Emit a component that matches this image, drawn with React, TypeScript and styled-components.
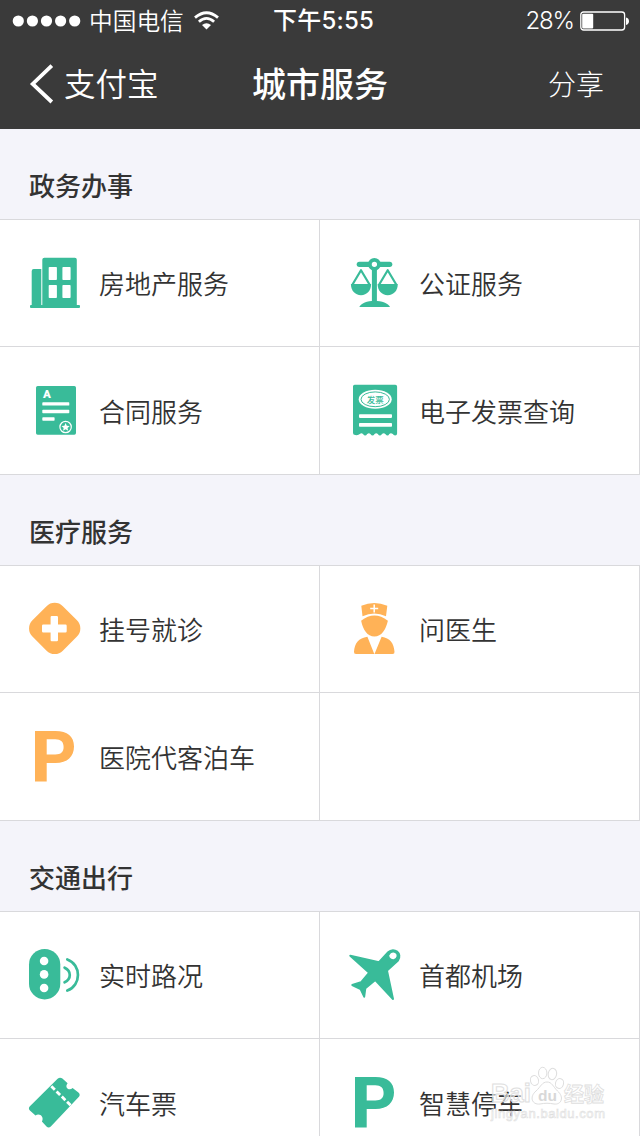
import React from "react";
import styled, { createGlobalStyle } from "styled-components";

const GREEN = "#39bb99";
const ORANGE = "#ffb257";

const GlobalStyle = createGlobalStyle`
  * { box-sizing: border-box; }
  body {
    margin: 0;
    background: #f4f4fa;
    font-family: Inter, "Noto Sans CJK SC", sans-serif;
    color: #333;
    overflow: hidden;
  }
`;

const Screen = styled.div`
  position: relative;
  width: 640px;
  height: 1136px;
  overflow: hidden;
  background: #f4f4fa;
`;

const Header = styled.header`
  height: 129px;
  background: #3a3a3a;
  color: #fff;
`;

const StatusBar = styled.div`
  display: grid;
  grid-template-columns: 1fr auto 1fr;
  align-items: center;
  height: 41px;
  padding: 0 11px 0 12px;
  font-size: 24px;
  line-height: 38px;
`;

const StatusGroup = styled.div<{ $end?: boolean }>`
  display: flex;
  align-items: center;
  justify-content: ${(p) => (p.$end ? "flex-end" : "flex-start")};
`;

const Carrier = styled.span`
  margin: 0 10px 0 8px;
  padding-top: 2px;
  font-size: 23.700px;
  font-weight: 350;
`;

const Clock = styled.span`
  font-size: 24px;
  font-weight: 500;
  letter-spacing: 0.2px;
  padding: 1px 0 0 6px;
`;

const Percent = styled.span`
  padding-top: 1px;
  font-size: 24px;
  font-weight: 350;
  letter-spacing: -1.100px;
  margin-right: 6px;
`;

const NavBar = styled.nav`
  display: grid;
  grid-template-columns: 1fr auto 1fr;
  align-items: center;
  height: 86px;
  padding: 0 36px 0 29px;
`;

const BackButton = styled.div`
  display: flex;
  align-items: center;
  gap: 10px;
  font-size: 31.500px;
  font-weight: 350;
  line-height: 44px;
`;

const BackText = styled.span`
  padding-top: 1px;
`;

const Title = styled.h1`
  margin: 0;
  padding: 2px 0 0 7px;
  font-size: 34px;
  font-weight: 500;
  line-height: 48px;
`;

const Share = styled.div`
  justify-self: end;
  padding-top: 1px;
  font-size: 28px;
  font-weight: 300;
  line-height: 40px;
`;

const SectionTitle = styled.h2`
  display: flex;
  align-items: center;
  height: 90px;
  margin: 0;
  padding: 25px 0 0 29px;
  font-size: 26px;
  font-weight: 500;
  line-height: 38px;
`;

const Grid = styled.div`
  display: grid;
  grid-template-columns: 320px 320px;
  grid-template-rows: 127px 128px;
  border-bottom: 1px solid #d9d9dc;
`;

const Cell = styled.div`
  display: flex;
  align-items: flex-start;
  gap: 19px;
  padding: 37px 0 0 28px;
  background: #fff;
  border-top: 1px solid #d9d9dc;
  border-right: 1px solid #d9d9dc;
`;

const Icon = styled.svg`
  display: block;
  flex: none;
  width: 52px;
  height: 52px;
  overflow: visible;
`;

const Label = styled.span<{ $low: boolean }>`
  padding-top: ${(p) => (p.$low ? 3 : 2)}px;
  font-size: 26px;
  font-weight: 350;
  line-height: 52px;
`;

const Watermark = styled.svg`
  position: absolute;
  left: 486px;
  top: 1062px;
  width: 124px;
  height: 64px;
`;

const Building = () => (
  <Icon viewBox="0 0 52 52" fill={GREEN}>
    <path d="M3.700 49V14a2 2 0 0 1 2-2h7.600v37z" />
    <rect x="14.300" y=".7" width="34.500" height="49" rx="2" />
    <rect x="2" y="48" width="50" height="3" rx="1" />
    <g fill="#fff">
      <rect x="20.700" y="10" width="8.200" height="13" rx=".8" />
      <rect x="34.400" y="10" width="8.200" height="13" rx=".8" />
      <rect x="20.700" y="28" width="8.200" height="13" rx=".8" />
      <rect x="34.400" y="28" width="8.200" height="13" rx=".8" />
    </g>
  </Icon>
);

const Scales = () => (
  <Icon viewBox="0 0 52 52" fill={GREEN}>
    <rect x="8.700" y="4.700" width="35.600" height="5.200" rx="2.600" />
    <rect x="23.900" y="8" width="5" height="38" />
    <circle cx="26.400" cy="7.300" r="4.500" fill="#fff" stroke={GREEN} strokeWidth="3.700" />
    <path d="M11.300 50c1.500-3.500 8-6.300 15.200-6.300S40.500 46.500 42 50z" />
    {[13, 39.700].map((x) => (
      <g key={x} transform={`translate(${x} 0)`}>
        <path d="M-8.500 27.500L0 13.200 8.500 27.500" fill="none" stroke={GREEN} strokeWidth="2.200" strokeLinejoin="round" />
        <path d="M-10.100 27H10.100C10.100 33.500 6 38.200 0 38.200S-10.100 33.500-10.100 27z" />
      </g>
    ))}
  </Icon>
);

const Contract = () => (
  <Icon viewBox="0 0 52 52">
    <rect x="8" y="2" width="40" height="48.700" rx="1.700" fill={GREEN} />
    <text x="18.900" y="14.300" textAnchor="middle" fontFamily="Roboto, sans-serif" fontSize="11.500" fontWeight="900" fill="#fff">A</text>
    <g fill="#fff">
      <rect x="14.300" y="18.200" width="27" height="3.400" rx=".7" />
      <rect x="14.300" y="25.800" width="27" height="3.400" rx=".7" />
      <rect x="14.300" y="33.300" width="12.300" height="3.400" rx=".7" />
      <path d="M37.600 39l1.200 2.700 2.900.3-2.200 1.900.7 2.900-2.600-1.500-2.600 1.500.7-2.900-2.200-1.900 2.900-.3z" />
    </g>
    <circle cx="37.600" cy="43" r="5.700" fill="none" stroke="#fff" strokeWidth="1.200" />
  </Icon>
);

const Invoice = () => (
  <Icon viewBox="0 0 52 52">
    <path
      fill={GREEN}
      d="M7 .8h40.300a1.800 1.800 0 0 1 1.800 1.800V49.500q0 2-2 2-1.500 0-2.300-1.400-2-1.700-3.500 0-1.500 3-4 0-1.500-1.700-3.300 0-2 3-4.200 0-1.500-1.700-3.200 0-2 3-4.200 0-1.500-1.700-3.200 0-2 3-4.200 0-1.500-1.700-3.200 0-1.300 1.400-4.600 1-2.200-.3-2.200-2.200V2.600A1.800 1.800 0 0 1 7 .8z"
    />
    <ellipse cx="27.200" cy="15.300" rx="16.500" ry="9.500" fill="#fff" />
    <ellipse cx="27.200" cy="15.300" rx="14.200" ry="7.400" fill="none" stroke={GREEN} strokeWidth="1" />
    <text x="27.200" y="18.500" textAnchor="middle" fontFamily="Noto Sans CJK SC, sans-serif" fontSize="8.500" fontWeight="500" fill={GREEN}>发票</text>
    <rect x="11" y="30.300" width="33" height="3.600" rx=".8" fill="#fff" />
    <rect x="11" y="39.100" width="33" height="3.600" rx=".8" fill="#fff" />
  </Icon>
);

const Register = () => (
  <Icon viewBox="0 0 52 52">
    <rect x="5.200" y="3.900" width="43" height="43" rx="11.500" fill={ORANGE} transform="rotate(45 26.700 25.400)" />
    <path d="M22.600 14.200q0-1.200 1.200-1.200h5q1.200 0 1.200 1.200v7.300h7.500q1.200 0 1.200 1.200v5.600q0 1.200-1.200 1.200H30v7.500q0 1.200-1.200 1.200h-5q-1.200 0-1.200-1.200v-7.500h-7.400q-1.200 0-1.200-1.200v-5.600q0-1.200 1.200-1.200h7.400z" fill="#fff" />
  </Icon>
);

const Doctor = () => (
  <Icon viewBox="0 0 52 52" fill={ORANGE}>
    <path d="M13.300 2.700Q26.300-2.600 39.300 2.700L38 13.200Q26.300 7.700 14.500 13.200z" />
    <path d="M26.200 1.500v8M22.200 5.500h8" stroke="#fff" strokeWidth="1.500" />
    <path d="M13.100 17.800Q26.300 7.200 39.900 17.800C37.800 27 33.500 33.500 26.400 33.500S15 27 13.100 17.800z" />
    <path d="M19.400 33.700L26.300 51H8q-2.300 0-2-2.200C6.600 40 10.600 35 19.400 33.700zM33.600 33.700L26.500 51H44.500q2.300 0 2-2.200C45.900 40 42 35 33.600 33.700z" />
  </Icon>
);

const Parking = ({ color }: { color: string }) => (
  <Icon viewBox="0 0 52 52">
    <path
      fill={color}
      fillRule="evenodd"
      d="M7 1h20.500C39.500 1 46 6.500 46 16.500S39.500 33 27.500 33H18.700v18.600H7zM18.700 9.300v15.100h8.600c5.700 0 8.300-2.700 8.300-7.500s-2.600-7.600-8.300-7.600z"
    />
  </Icon>
);

const Traffic = () => (
  <Icon viewBox="0 0 52 52">
    <rect x="1" y="0" width="31.300" height="50.400" rx="15.600" fill={GREEN} />
    <g fill="#fff">
      <circle cx="16.100" cy="12" r="4.300" />
      <circle cx="16.100" cy="25.400" r="4.300" />
      <circle cx="16.100" cy="39" r="4.300" />
    </g>
    <g fill="none" stroke={GREEN} strokeWidth="2.700" strokeLinecap="round">
      <path d="M39.300 10.400C53.500 15.500 53.500 36.500 39.300 41.600" />
      <path d="M36.600 18.700C43.500 22 43.500 30 36.600 33.300" />
    </g>
  </Icon>
);

const Plane = () => (
  <Icon viewBox="0 0 52 52">
    <path
      fill={GREEN}
      stroke={GREEN}
      strokeWidth="2"
      strokeLinejoin="round"
      d="M2.300 6.700L31 13.200 40.200 3.300C46-2.500 54.800 4.600 50 11.500L39 21.600 45 50 27.300 31 17.300 39.300 16.200 47.700 12.600 40 4.300 36 13 33.300 21.200 23.700z"
    />
    <path d="M41.200 6.800Q42.500 3.600 45.400 3.500 48.900 4 48.600 7.200 48 9.700 45.700 10.200 41.800 10.200 41.200 6.800z" fill="#fff" />
  </Icon>
);

const Ticket = () => (
  <Icon viewBox="0 0 52 52">
    <path
      fill={GREEN}
      d="M29.600 2.800q2.400-2.200 4.800-.2l5.200 4.600c-3.500 4.200 1.500 8.200 5 4.800l5.800 4.500q2.400 2.200.3 4.600L22.800 50.600q-2.200 1.900-4.300 0l-4.600-5c2.600-4.600-2.200-9-6.400-6.100l-5.600-5q-2-2.100 0-4.300z"
    />
    <path d="M23.300 10.200L43.300 30" stroke="#fff" strokeWidth="2.800" strokeDasharray="5 2.400" />
  </Icon>
);

const sections = [
  {
    title: "政务办事",
    items: [
      { label: "房地产服务", icon: <Building /> },
      { label: "公证服务", icon: <Scales /> },
      { label: "合同服务", icon: <Contract /> },
      { label: "电子发票查询", icon: <Invoice /> },
    ],
  },
  {
    title: "医疗服务",
    items: [
      { label: "挂号就诊", icon: <Register /> },
      { label: "问医生", icon: <Doctor /> },
      { label: "医院代客泊车", icon: <Parking color={ORANGE} /> },
      null,
    ],
  },
  {
    title: "交通出行",
    items: [
      { label: "实时路况", icon: <Traffic /> },
      { label: "首都机场", icon: <Plane /> },
      { label: "汽车票", icon: <Ticket /> },
      { label: "智慧停车", icon: <Parking color={GREEN} /> },
    ],
  },
];

export default function App() {
  return (
    <Screen>
      <GlobalStyle />
      <Header>
        <StatusBar>
          <StatusGroup>
            <svg width="69" height="12" viewBox="0 0 69 12" fill="#fff">
              {[0, 1, 2, 3, 4].map((i) => (
                <circle key={i} cx={6.300 + i * 14.100} cy="6" r="5.600" />
              ))}
            </svg>
            <Carrier>中国电信</Carrier>
            <svg width="26" height="20" viewBox="0 0 26 20">
              <g fill="none" stroke="#fff" strokeWidth="2.800">
                <path d="M1 6.600Q12.500-3.200 24 6.600" />
                <path d="M4.900 10.700Q12.500 4 20.100 10.700" />
              </g>
              <path d="M8 14Q12.500 10.500 17 14L12.500 18.500z" fill="#fff" />
            </svg>
          </StatusGroup>
          <Clock>下午5:55</Clock>
          <StatusGroup $end>
            <Percent>28%</Percent>
            <svg width="49" height="20" viewBox="0 0 49 20">
              <rect x=".8" y="1" width="43.800" height="18" rx="2.800" fill="none" stroke="#fff" strokeWidth="1.300" />
              <rect x="2.200" y="2.700" width="11" height="14.800" rx="1" fill="#fff" />
              <path d="M46 6.500q3 .8 3 3.700t-3 3.700z" fill="#fff" />
            </svg>
          </StatusGroup>
        </StatusBar>
        <NavBar>
          <BackButton>
            <svg width="25" height="40" viewBox="0 0 25 40">
              <path d="M22.800 1.700L3.700 20l19.100 18" fill="none" stroke="#fff" strokeWidth="3.800" />
            </svg>
            <BackText>支付宝</BackText>
          </BackButton>
          <Title>城市服务</Title>
          <Share>分享</Share>
        </NavBar>
      </Header>
      {sections.map((section) => (
        <section key={section.title}>
          <SectionTitle>{section.title}</SectionTitle>
          <Grid>
            {section.items.map((item, i) => (
              <Cell key={i}>
                {item && item.icon}
                {item && <Label $low={i > 1}>{item.label}</Label>}
              </Cell>
            ))}
          </Grid>
        </section>
      ))}
      <Watermark viewBox="0 0 124 64">
        <g fill="#fff" fillOpacity=".6" stroke="#dedede" strokeWidth="1" fontFamily="Liberation Sans, Noto Sans CJK SC, sans-serif" fontWeight="700">
          <text x="5" y="40" fontSize="25.500" textLength="40" lengthAdjust="spacingAndGlyphs">Bai</text>
          <ellipse cx="48.500" cy="18.500" rx="4" ry="5" transform="rotate(-15 48.500 18.500)" />
          <ellipse cx="56.700" cy="11" rx="4.200" ry="5.700" />
          <ellipse cx="66.400" cy="12" rx="4.200" ry="5.700" transform="rotate(12 66.400 12)" />
          <ellipse cx="73.500" cy="21.500" rx="4" ry="5" transform="rotate(15 73.500 21.500)" />
          <path d="M61 20c5 0 6 4.500 10.500 9 7 6 4 14-3.500 13-5-1-9-1-14 0-8 1-11-7-4-13 5-4.500 6-9 11-9z" />
          <text x="52" y="39" fontSize="15.500" textLength="19" fill="#d8d8d8" fillOpacity="1" stroke="none">du</text>
          <text x="78" y="40" fontSize="20" strokeWidth=".8">经验</text>
          <text x="5" y="56" fontSize="13" textLength="114" fontWeight="400" strokeWidth=".6">jingyan.baidu.com</text>
        </g>
      </Watermark>
    </Screen>
  );
}
